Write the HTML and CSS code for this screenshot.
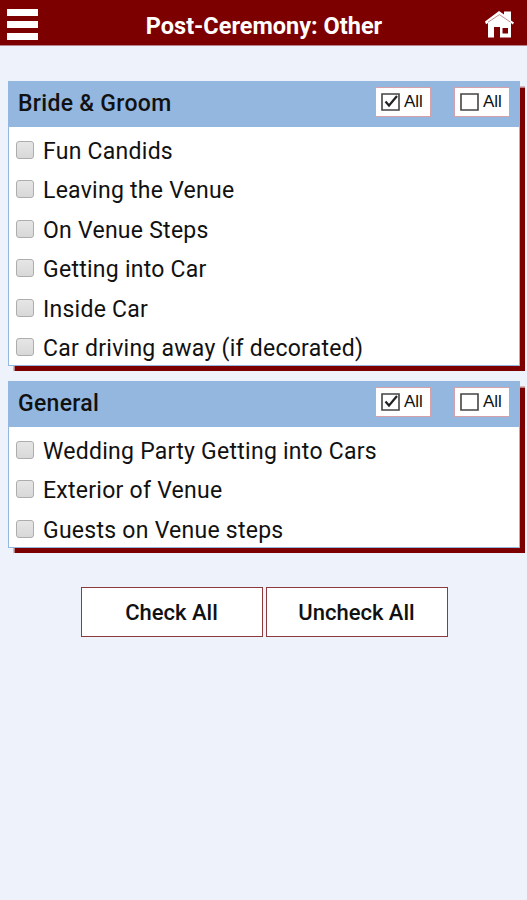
FILE: index.html
```html
<!DOCTYPE html>
<html lang="en">
<head>
<meta charset="utf-8">
<title>Post-Ceremony: Other</title>
<link rel="stylesheet" href="styles.css">
</head>
<body>
<header class="bar">
  <div class="menu"><span></span><span></span><span></span></div>
  <h1>Post-Ceremony: Other</h1>
  <svg class="home" width="30" height="28" viewBox="0 0 30 28"><path fill="#fff" fill-rule="evenodd" d="M1 11.5 15 1l5 3.5V1.5h7v9l3 2-1.2 2L27 13v14.5H16V17h-6v10.5H4V13l-2 1.2zM18.500 18v5.500h5.500V18z"/><path d="M4 12.200 15.500 4.600l11 7.600" fill="none" stroke="#b87070" stroke-width=".8"/></svg>
</header>
<main>
  <section class="card">
    <div class="head">
      <h2>Bride &amp; Groom</h2>
      <button class="all"><svg width="20" height="20" viewBox="0 0 20 20"><path class="box" d="M2 2h17v16H2z"/><path class="tick" d="m5.500 9.500 3.500 4L17 4"/></svg>All</button>
      <button class="all"><svg width="20" height="20" viewBox="0 0 20 20"><path class="box" d="M2 2h17v16H2z"/></svg>All</button>
    </div>
    <ul>
      <li><i></i><span>Fun Candids</span></li>
      <li><i></i><span>Leaving the Venue</span></li>
      <li><i></i><span>On Venue Steps</span></li>
      <li><i></i><span>Getting into Car</span></li>
      <li><i></i><span>Inside Car</span></li>
      <li><i></i><span>Car driving away (if decorated)</span></li>
    </ul>
  </section>
  <section class="card">
    <div class="head">
      <h2>General</h2>
      <button class="all"><svg width="20" height="20" viewBox="0 0 20 20"><path class="box" d="M2 2h17v16H2z"/><path class="tick" d="m5.500 9.500 3.500 4L17 4"/></svg>All</button>
      <button class="all"><svg width="20" height="20" viewBox="0 0 20 20"><path class="box" d="M2 2h17v16H2z"/></svg>All</button>
    </div>
    <ul>
      <li><i></i><span>Wedding Party Getting into Cars</span></li>
      <li><i></i><span>Exterior of Venue</span></li>
      <li><i></i><span>Guests on Venue steps</span></li>
    </ul>
  </section>
  <div class="actions"><button>Check All</button><button>Uncheck All</button></div>
</main>
</body>
</html>
```
FILE: styles.css
```css
* { box-sizing: border-box; }
body { margin: 0; min-height: 900px; background: #eef3fb; font-family: Roboto, "Liberation Sans", sans-serif; color: #111; }
.bar { height: 46px; padding: 0 13px 0 7px; background: #7d0000; border-bottom: 1px solid #b98489; display: flex; align-items: flex-start; justify-content: space-between; color: #fff; }
.menu { display: flex; flex-direction: column; gap: 5px; padding-top: 9px; }
.menu span { width: 31px; height: 7px; background: #fff; }
.bar h1 { margin: 0; font-size: 23.5px; line-height: 28px; padding: 12px 0 0 6px; font-weight: 700; }
.home { margin-top: 10px; }
main { padding: 35px 7px 0 8px; }
.card { width: 512px; margin-bottom: 15px; background: #fff; border: 1px solid #94b7df; box-shadow: 4.5px 4.5px 1px #7d0000; }
.head { height: 45px; padding: 0 9px; background: #94b7df; display: flex; align-items: flex-start; }
h2 { margin: 0; flex: 1; font-size: 23px; font-weight: 500; line-height: 44px; letter-spacing: .3px; }
button { font-family: inherit; color: #111; border-radius: 0; background: #fff; padding: 0; }
.all { width: 56px; height: 30px; margin: 5px 0 0; border: 1px solid #d5a2ab; display: flex; align-items: center; gap: 4px; padding-left: 4px; font-family: "Liberation Sans", sans-serif; font-size: 17px; }
.all + .all { margin-left: 23px; }
.box { fill: #fff; stroke: #444; stroke-width: 1.6; }
.tick { fill: none; stroke: #222; stroke-width: 2.2; }
ul { list-style: none; margin: 0; padding: 3px 0 0 7px; height: 238px; }
.card + .card ul { height: 120px; }
li { height: 39.5px; display: flex; align-items: center; gap: 9px; font-size: 23px; letter-spacing: .26px; white-space: pre; }
li span { padding-top: 3px; }
i { width: 18px; height: 18px; border: 1px solid #adadad; border-radius: 3px; background: linear-gradient(#e6e6e6, #d8d8d8); }
.actions { display: flex; justify-content: center; gap: 3px; padding: 24px 0 0; }
.actions button { width: 182px; height: 50px; border: 1px solid #8b3a3e; font-size: 22px; font-weight: 500; }
```
